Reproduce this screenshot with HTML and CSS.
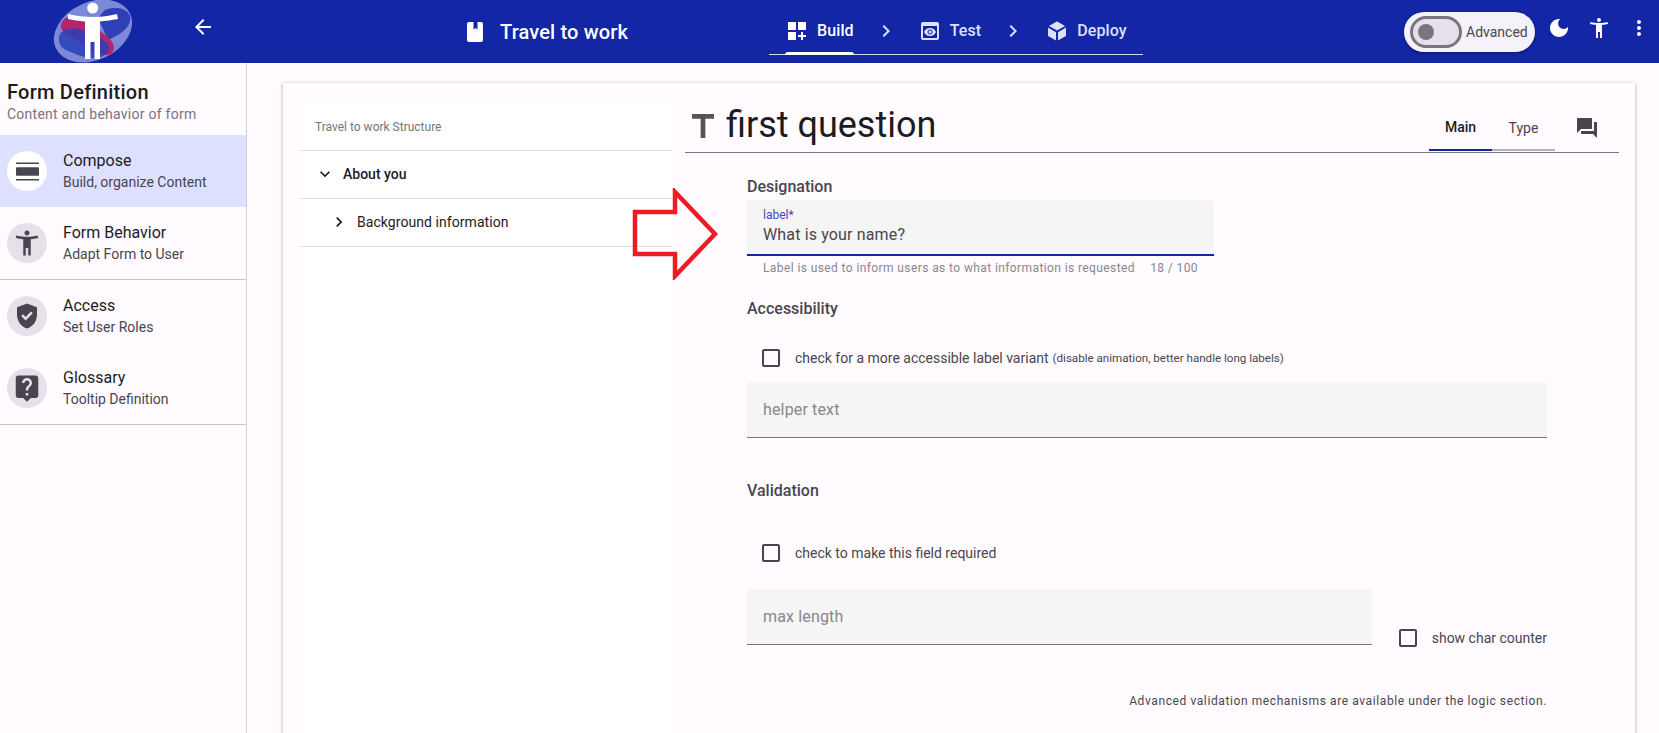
FILE: index.html
```html
<!DOCTYPE html>
<html lang="en">
<head>
  <meta charset="UTF-8">
  <title>Travel to work</title>
  <link rel="stylesheet" href="styles.css">
</head>
<body>
  <header class="topbar">
    <div class="brand">
      <svg class="logo" viewBox="0 0 80 63" width="80" height="63">
        <ellipse cx="40" cy="31" rx="41" ry="29" transform="rotate(-25 40 31)" fill="#7c88d8"/>
        <path d="M52 10c10-4 22-2 25 6 2 8-6 16-14 20l-8 4-10-22z" fill="#2f3fb5"/>
        <path d="M9 22c4-8 17-6 27 0l20 16c8 8 6 18-4 17-12-1-18-9-28-15C12 34 5 30 9 22z" fill="#b3246f"/>
        <path d="M6 40c-1-10 10-13 20-11 12 3 26 9 30 17 2 6-6 12-14 12-8 1-14-2-22-5C12 50 6 47 6 40z" fill="#2b3fb8" opacity=".85"/>
        <circle cx="39.700" cy="8" r="5.500" fill="#fff"/>
        <path d="M15 14c8 2 16 3 25 3s16-1 24-3l1 5c-6 1-12 2-18 2.500V59h-5.500V42h-4v17H32V21.500c-6-.5-12-1.500-17-2.500z" fill="#fff"/>
      </svg>
      <svg class="icon back" viewBox="0 0 24 24"><path d="M20 11H7.830l5.590-5.590L12 4l-8 8 8 8 1.410-1.410L7.830 13H20v-2z"/></svg>
    </div>
    <div class="form-name">
      <svg class="book" viewBox="0 0 16 20"><path d="M2 0h4.500v7.500l2-1.500 2 1.500V0H14a2 2 0 0 1 2 2v16a2 2 0 0 1-2 2H2a2 2 0 0 1-2-2V2a2 2 0 0 1 2-2z"/></svg>
      <span>Travel to work</span>
    </div>
    <nav class="steps">
      <a class="step active">
        <svg class="icon" viewBox="0 0 24 24"><path d="M3 3h8v8H3zm10 0h8v8h-8zM3 13h8v8H3zm15 0h-2v3h-3v2h3v3h2v-3h3v-2h-3z"/></svg>
        Build
      </a>
      <svg class="icon chevron" viewBox="0 0 24 24"><path d="M10 6 8.590 7.410 13.170 12l-4.580 4.590L10 18l6-6z"/></svg>
      <a class="step">
        <svg class="icon" viewBox="0 0 24 24"><path d="M19 3H5c-1.110 0-2 .9-2 2v14c0 1.100.89 2 2 2h14c1.100 0 2-.9 2-2V5c0-1.100-.89-2-2-2zm0 16H5V7h14v12zm-5.500-6c0 .83-.67 1.500-1.500 1.500s-1.500-.67-1.500-1.500.67-1.500 1.500-1.500 1.500.67 1.500 1.500zM12 9c-2.730 0-5.060 1.660-6 4 .94 2.340 3.270 4 6 4s5.060-1.660 6-4c-.94-2.340-3.270-4-6-4zm0 6.500c-1.380 0-2.500-1.120-2.500-2.500s1.120-2.500 2.500-2.500 2.500 1.120 2.500 2.500-1.120 2.500-2.500 2.500z"/></svg>
        Test
      </a>
      <svg class="icon chevron" viewBox="0 0 24 24"><path d="M10 6 8.590 7.410 13.170 12l-4.580 4.590L10 18l6-6z"/></svg>
      <a class="step">
        <svg class="icon" viewBox="0 0 24 24"><path d="M11 21.500 3.500 17.200a1.500 1.500 0 0 1-.5-1V8.600l8 4.600zm2 0v-8.300l8-4.600v7.600a1.500 1.500 0 0 1-.5 1zM12 11.500 4 6.900l7.300-4.200a1.500 1.500 0 0 1 1.400 0L20 6.900z"/></svg>
        Deploy
      </a>
    </nav>
    <div class="tools">
      <div class="advanced">
        <span class="switch"><span class="thumb"></span></span>
        <span>Advanced</span>
      </div>
      <svg class="icon" viewBox="0 0 24 24"><path d="M12 3c-4.970 0-9 4.030-9 9s4.030 9 9 9 9-4.030 9-9c0-.46-.04-.92-.1-1.360-.98 1.370-2.580 2.260-4.400 2.260-2.980 0-5.400-2.420-5.400-5.400 0-1.810.89-3.420 2.260-4.400-.44-.06-.9-.1-1.360-.1z"/></svg>
      <svg class="icon" viewBox="0 0 24 24"><path d="M20.500 6c-2.610.7-5.670 1-8.500 1s-5.890-.3-8.500-1L3 8c1.860.5 4 .83 6 1v13h2v-6h2v6h2V9c2-.17 4.140-.5 6-1l-.5-2zM12 6c1.100 0 2-.9 2-2s-.9-2-2-2-2 .9-2 2 .9 2 2 2z"/></svg>
      <svg class="icon" viewBox="0 0 24 24"><path d="M12 8c1.100 0 2-.9 2-2s-.9-2-2-2-2 .9-2 2 .9 2 2 2zm0 2c-1.100 0-2 .9-2 2s.9 2 2 2 2-.9 2-2-.9-2-2-2zm0 6c-1.100 0-2 .9-2 2s.9 2 2 2 2-.9 2-2-.9-2-2-2z"/></svg>
    </div>
  </header>

  <div class="main">
    <aside class="sidebar">
      <div class="side-head">
        <h2>Form Definition</h2>
        <p>Content and behavior of form</p>
      </div>
      <div class="side-item selected">
        <span class="avatar"><svg class="squat" viewBox="2 3 19 18" preserveAspectRatio="none"><path d="M2 20.500h19V19H2v1.500zM20 8H3c-.55 0-1 .45-1 1v6c0 .55.45 1 1 1h17c.55 0 1-.45 1-1V9c0-.55-.45-1-1-1zM2 3.500V5h19V3.500H2z"/></svg></span>
        <div class="side-text"><strong>Compose</strong><small>Build, organize Content</small></div>
      </div>
      <div class="side-item ruled">
        <span class="avatar"><svg viewBox="0 0 24 24"><path d="M20.500 6c-2.610.7-5.670 1-8.500 1s-5.890-.3-8.500-1L3 8c1.860.5 4 .83 6 1v13h2v-6h2v6h2V9c2-.17 4.140-.5 6-1l-.5-2zM12 6c1.100 0 2-.9 2-2s-.9-2-2-2-2 .9-2 2 .9 2 2 2z"/></svg></span>
        <div class="side-text"><strong>Form Behavior</strong><small>Adapt Form to User</small></div>
      </div>
      <div class="side-item">
        <span class="avatar"><svg viewBox="0 0 24 24"><path d="M12 2 4 5v6.090c0 5.050 3.410 9.760 8 10.910 4.590-1.150 8-5.860 8-10.910V5l-8-3zm-1.060 13.540L7.400 12l1.410-1.410 2.120 2.120 4.240-4.240 1.410 1.410-5.640 5.660z"/></svg></span>
        <div class="side-text"><strong>Access</strong><small>Set User Roles</small></div>
      </div>
      <div class="side-item ruled">
        <span class="avatar"><svg viewBox="0 0 24 24"><path d="M19 2H5c-1.110 0-2 .9-2 2v14c0 1.100.89 2 2 2h4l3 3 3-3h4c1.100 0 2-.9 2-2V4c0-1.100-.9-2-2-2zm-6 16h-2v-2h2v2zm2.070-7.750l-.9.92C13.450 11.900 13 12.500 13 14h-2v-.5c0-1.100.45-2.100 1.170-2.830l1.240-1.260c.37-.36.59-.86.59-1.410 0-1.100-.9-2-2-2s-2 .9-2 2H8c0-2.210 1.790-4 4-4s4 1.790 4 4c0 .88-.36 1.680-.93 2.250z"/></svg></span>
        <div class="side-text"><strong>Glossary</strong><small>Tooltip Definition</small></div>
      </div>
    </aside>

    <section class="card">
      <div class="structure">
        <div class="structure-title">Travel to work Structure</div>
        <div class="tree-row page">
          <svg viewBox="0 0 24 24"><path d="M16.590 8.590 12 13.170 7.410 8.590 6 10l6 6 6-6z"/></svg>
          About you
        </div>
        <div class="tree-row sub">
          <svg viewBox="0 0 24 24"><path d="M10 6 8.590 7.410 13.170 12l-4.580 4.590L10 18l6-6z"/></svg>
          Background information
        </div>
      </div>

      <div class="editor">
        <div class="editor-head">
          <svg class="type-icon" viewBox="5 4 14 15" preserveAspectRatio="none"><path d="M5 4v3h5.500v12h3V7H19V4z"/></svg>
          <h1>first question</h1>
          <div class="tabs">
            <span class="tab on">Main</span>
            <span class="tab">Type</span>
          </div>
          <svg class="forum" viewBox="0 0 24 24"><path d="M21 6h-2v9H6v2c0 .55.45 1 1 1h11l4 4V7c0-.55-.45-1-1-1zm-4 6V3c0-.55-.45-1-1-1H3c-.55 0-1 .45-1 1v14l4-4h10c.55 0 1-.45 1-1z"/></svg>
        </div>

        <div class="editor-body">
          <h3 class="group first">Designation</h3>
          <div class="field short active">
            <span class="float">label*</span>
            <span class="value">What is your name?</span>
          </div>
          <div class="hint"><span>Label is used to inform users as to what information is requested</span><span>18 / 100</span></div>

          <h3 class="group access">Accessibility</h3>
          <label class="check indent"><span class="box"></span>check for a more accessible label variant <small>(disable animation, better handle long labels)</small></label>
          <div class="field"><span class="placeholder">helper text</span></div>

          <h3 class="group valid">Validation</h3>
          <label class="check indent tall"><span class="box"></span>check to make this field required</label>
          <div class="length-row">
            <div class="field"><span class="placeholder">max length</span></div>
            <label class="check"><span class="box"></span>show char counter</label>
          </div>
          <p class="note">Advanced validation mechanisms are available under the logic section.</p>
        </div>
      </div>

      <svg class="arrow" viewBox="0 0 90 92" width="90" height="92">
        <path d="M3 24h40V4l40 42-40 42V66H3z" fill="none" stroke="#ed1c24" stroke-width="4.500"/>
      </svg>
    </section>
  </div>
</body>
</html>
```

FILE: styles.css
```css
* {
  box-sizing: border-box;
}

html, body {
  height: 100%;
}

body {
  margin: 0;
  overflow: hidden;
  font-family: Roboto, "Liberation Sans", sans-serif;
  font-size: 14px;
  background-color: #fffbff;
  color: #1c1b1f;
}

svg {
  display: block;
  fill: currentColor;
  flex: none;
}

.icon {
  width: 24px;
  height: 24px;
}

/* top bar */
.topbar {
  position: relative;
  display: flex;
  height: 63px;
  background-color: #1226a6;
  color: #fff;
}

.brand {
  display: flex;
  align-items: center;
  width: 467px;
  padding-left: 53px;
  overflow: hidden;
}

.logo {
  overflow: visible;
}

.back {
  margin-left: 58px;
  margin-top: -10px;
}

.form-name {
  display: flex;
  align-items: center;
  gap: 17px;
  width: 302px;
  font-size: 20px;
  font-weight: 500;
  letter-spacing: .15px;
}

.book {
  width: 16px;
  height: 20px;
}

.steps {
  display: flex;
  align-items: center;
  width: 374px;
  height: 55px;
  padding: 7px 0 0 16px;
  border-bottom: 1px solid #d5d8f5;
  color: #dfe0ff;
  font-size: 16px;
  font-weight: 500;
  letter-spacing: .1px;
}

.step {
  position: relative;
  display: flex;
  align-items: center;
  gap: 8px;
  height: 100%;
}

.step.active {
  color: #fff;
}

.step.active::after {
  content: "";
  position: absolute;
  left: 0;
  right: 0;
  bottom: -1px;
  height: 3px;
  border-radius: 3px 3px 0 0;
  background-color: #fff;
}

.chevron {
  margin: 0 20px;
}

.tools {
  display: flex;
  align-items: center;
  margin-left: auto;
}

.tools .icon {
  margin: -8px 8px 0;
}

.advanced {
  display: flex;
  align-items: center;
  gap: 4px;
  width: 131px;
  height: 40px;
  margin-right: 4px;
  padding-left: 6px;
  border-radius: 20px;
  background-color: #f5f2fa;
  color: #49454f;
  font-size: 14px;
  box-shadow: 0 1px 3px rgba(0, 0, 0, .4);
}

.switch {
  display: flex;
  align-items: center;
  width: 52px;
  height: 32px;
  padding-left: 8px;
  border: 3px solid #79747e;
  border-radius: 16px;
  background-color: #e6e0e9;
}

.thumb {
  width: 16px;
  height: 16px;
  border-radius: 50%;
  margin-left: -3px;
  background-color: #79747e;
}

/* page below the bar */
.main {
  display: flex;
  height: 670px;
}

.sidebar {
  width: 247px;
  flex: none;
  border-right: 1px solid #cfd0d4;
}

.side-head {
  height: 72px;
  padding: 18px 7px 0;
}

.side-head h2 {
  margin: 0;
  font-size: 20px;
  font-weight: 500;
  line-height: 22px;
  letter-spacing: .25px;
}

.side-head p {
  margin: 1px 0 0;
  font-size: 14px;
  line-height: 20px;
  letter-spacing: .25px;
  color: #79747e;
}

.side-item {
  display: flex;
  align-items: center;
  gap: 16px;
  height: 72px;
  padding-left: 7px;
}

.side-item.selected {
  background-color: #dee0ff;
}

.side-item.ruled {
  height: 73px;
  border-bottom: 1px solid #c4c7c9;
}

.side-text {
  margin-top: -2px;
}

.side-item strong {
  display: block;
  font-size: 16px;
  font-weight: 400;
  line-height: 24px;
}

.side-item small {
  display: block;
  margin-top: -1px;
  font-size: 14px;
  line-height: 20px;
  color: #49454f;
}

.avatar {
  display: flex;
  align-items: center;
  justify-content: center;
  width: 40px;
  height: 40px;
  border-radius: 50%;
  background-color: #e6e1e8;
  color: #49454f;
}

.selected .avatar {
  background-color: #fff;
}

.avatar svg {
  width: 30px;
  height: 30px;
}

.avatar svg.squat {
  width: 23px;
  height: 19px;
}

/* card */
.card {
  position: relative;
  display: flex;
  flex: none;
  width: 1352px;
  height: 700px;
  margin: 20px 0 0 36px;
  padding: 19px 16px 0;
  box-shadow: 0 1px 4px rgba(0, 0, 0, .35);
}

.structure {
  width: 374px;
  flex: none;
  background-color: #fff;
}

.structure-title {
  height: 49px;
  padding: 17px 16px 0;
  border-bottom: 1px solid #e2e2e2;
  font-size: 12px;
  line-height: 16px;
  color: #79747e;
}

.tree-row {
  display: flex;
  align-items: center;
  height: 48px;
  padding-bottom: 2px;
  border-bottom: 1px solid #e2e2e2;
}

.tree-row svg {
  width: 20px;
  height: 20px;
}

.tree-row.page {
  padding-left: 16px;
  gap: 8px;
  font-weight: 500;
}

.tree-row.sub {
  padding-left: 30px;
  gap: 8px;
  letter-spacing: .06px;
}

.editor {
  width: 934px;
  margin-left: 12px;
  flex: none;
}

.editor-head {
  display: flex;
  align-items: center;
  height: 51px;
  border-bottom: 1px solid #79747e;
  padding-left: 7px;
}

.type-icon {
  width: 22px;
  height: 24px;
  margin-top: -2px;
  color: #555;
}

.editor-head h1 {
  margin: -5px 0 0 12px;
  font-size: 36px;
  font-weight: 400;
  line-height: 48px;
}

.tabs {
  display: flex;
  margin: 0 -1px 1px auto;
  align-self: flex-end;
  height: 49px;
  border-bottom: 2px solid #b4b4b8;
}

.tab {
  display: flex;
  align-items: center;
  justify-content: center;
  width: 63px;
  margin-bottom: -2px;
  padding-top: 2px;
  color: #49454f;
}

.tab.on {
  color: #1c1b1f;
  font-weight: 500;
  border-bottom: 2px solid #1226a6;
}

.forum {
  width: 24px;
  height: 24px;
  margin: 2px 20px 0 21px;
  color: #49454f;
}

.editor-body {
  padding: 0 72px 0 62px;
}

.group {
  margin: 0;
  font-size: 16px;
  font-weight: 500;
  line-height: 20px;
  color: #49454f;
}

.group.first {
  margin-top: 24px;
}

.group.access {
  margin-top: 23px;
}

.group.valid {
  margin-top: 43px;
}

.field {
  position: relative;
  display: flex;
  align-items: center;
  height: 56px;
  padding: 0 16px;
  border-radius: 4px 4px 0 0;
  border-bottom: 1px solid #79747e;
  background-color: #f4f5f4;
}

.field.short {
  width: 467px;
  margin-top: 3px;
  display: block;
  padding-top: 8px;
  border-bottom: 2px solid #1226a6;
}

.float {
  display: block;
  font-size: 12px;
  line-height: 14px;
  color: #3d4bb8;
}

.value {
  display: block;
  margin-top: 2px;
  font-size: 16px;
  line-height: 22px;
  letter-spacing: .15px;
  color: #49454f;
}

.placeholder {
  font-size: 16px;
  letter-spacing: .15px;
  color: #8a868e;
}

.hint {
  display: flex;
  justify-content: space-between;
  width: 467px;
  padding: 4px 16px 0;
  font-size: 12px;
  line-height: 16px;
  letter-spacing: .4px;
  color: #8a868e;
}

.check {
  display: flex;
  align-items: center;
  font-size: 14px;
  color: #49454f;
}

.check small {
  margin-left: 4px;
  font-size: 11.600px;
}

.box {
  width: 18px;
  height: 18px;
  margin-right: 15px;
  border: 2px solid #49454f;
  border-radius: 2px;
  flex: none;
}

.check.indent {
  height: 49px;
  margin-top: 14px;
  padding: 0 0 0 15px;
}

.check.tall {
  height: 73px;
  margin-top: 15px;
}

.length-row {
  display: flex;
  align-items: flex-end;
  justify-content: space-between;
}

.length-row .field {
  width: 625px;
}

.length-row .check {
  margin-bottom: -2px;
}

.note {
  margin: 48px 0 0;
  text-align: right;
  font-size: 12px;
  line-height: 16px;
  letter-spacing: .6px;
  color: #49454f;
}

/* red annotation arrow drawn on the screenshot */
.arrow {
  position: absolute;
  left: 349px;
  top: 105px;
}
```
